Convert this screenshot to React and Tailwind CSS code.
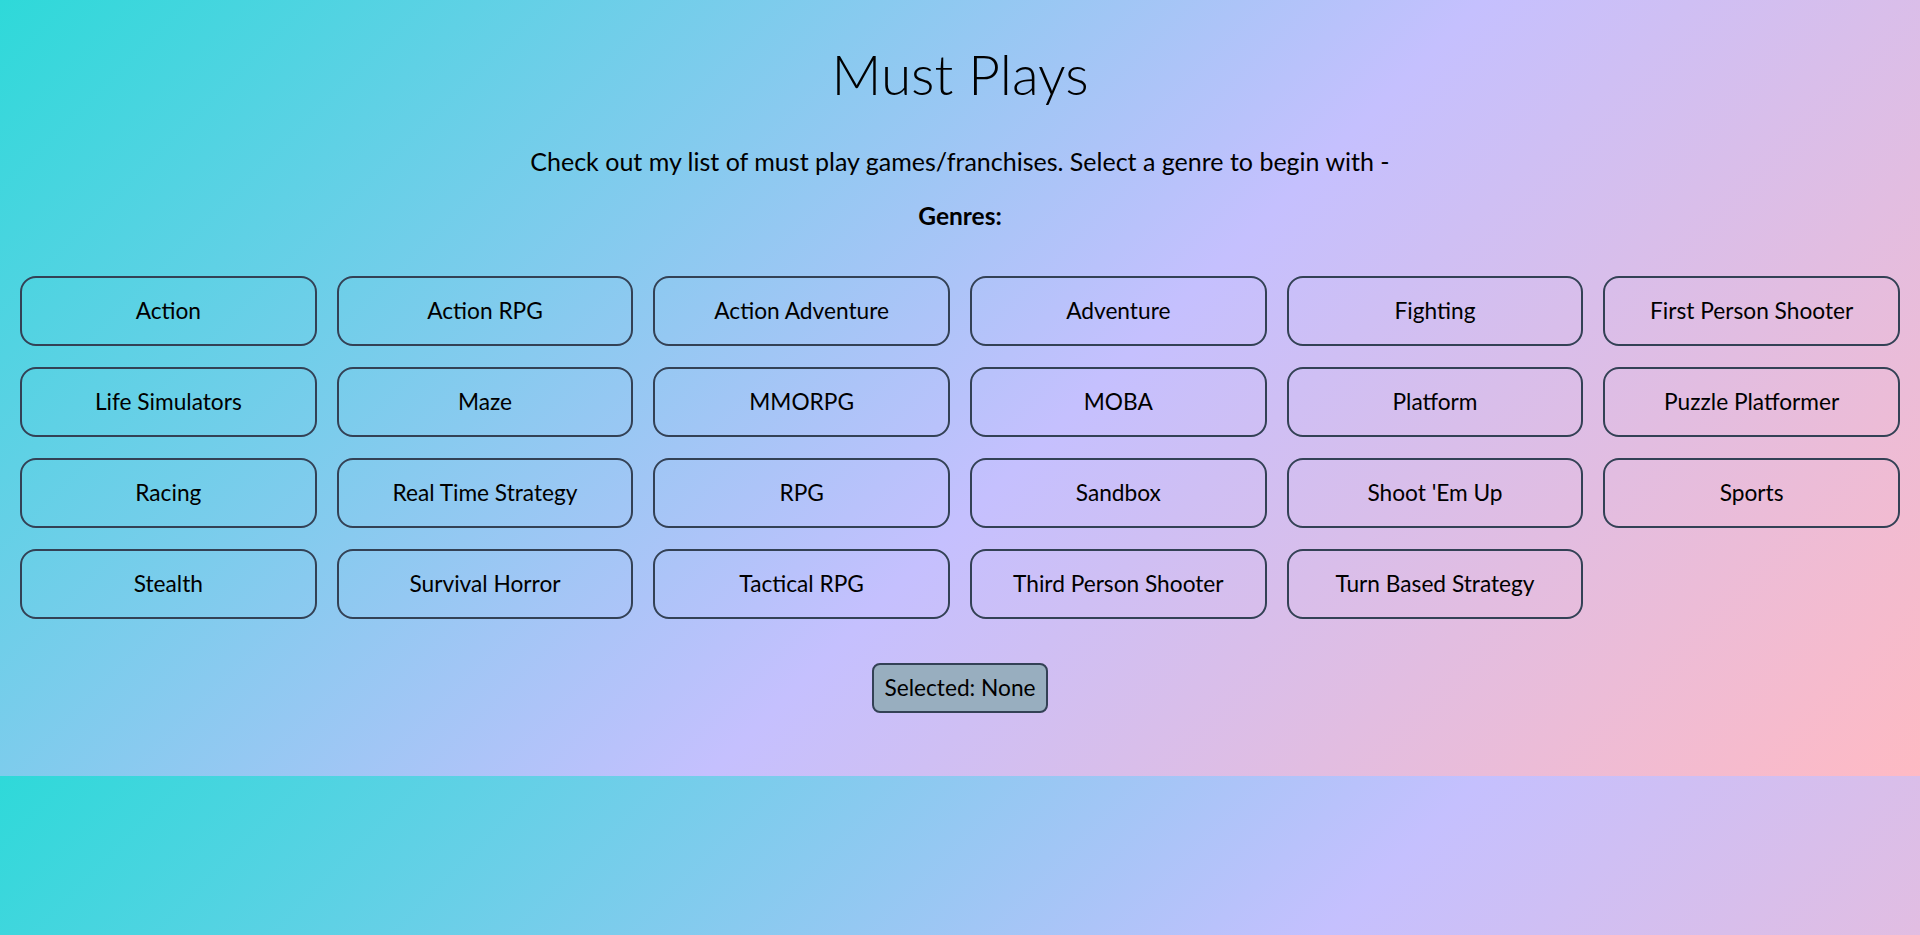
import React from "react";

const genres = [
  "Action",
  "Action RPG",
  "Action Adventure",
  "Adventure",
  "Fighting",
  "First Person Shooter",
  "Life Simulators",
  "Maze",
  "MMORPG",
  "MOBA",
  "Platform",
  "Puzzle Platformer",
  "Racing",
  "Real Time Strategy",
  "RPG",
  "Sandbox",
  "Shoot 'Em Up",
  "Sports",
  "Stealth",
  "Survival Horror",
  "Tactical RPG",
  "Third Person Shooter",
  "Turn Based Strategy",
];

export default function App() {
  return (
    <div className="min-h-[935px] w-full bg-[linear-gradient(135deg,#2ed9d9_0%,#c5c0fe_55%,#ffbac4_100%)] bg-[length:100%_776px] bg-repeat text-black font-['Lato',sans-serif]">
      <div className="flex h-[776px] flex-col items-center">
        <h1 className="mt-[42px] text-[55px] font-light leading-[64px]">Must Plays</h1>
        <p className="mt-[40px] text-[25px] leading-[30px]">
          Check out my list of must play games/franchises. Select a genre to begin with -
        </p>
        <p className="mt-[25px] text-[24.5px] font-bold leading-[30px]">Genres:</p>
        <div className="mt-[45px] grid w-full grid-cols-6 gap-x-5 gap-y-[21px] px-5">
          {genres.map((g) => (
            <button
              key={g}
              className="flex h-[70px] items-center justify-center rounded-[16px] border-2 border-[#334155] bg-transparent text-[22.7px] text-black"
            >
              {g}
            </button>
          ))}
        </div>
        <div className="mt-[44px] flex h-[50px] items-center rounded-[8px] border-2 border-[#334155] bg-[#98aebf] px-[10px] text-[22.7px]">
          Selected: None
        </div>
      </div>
    </div>
  );
}
